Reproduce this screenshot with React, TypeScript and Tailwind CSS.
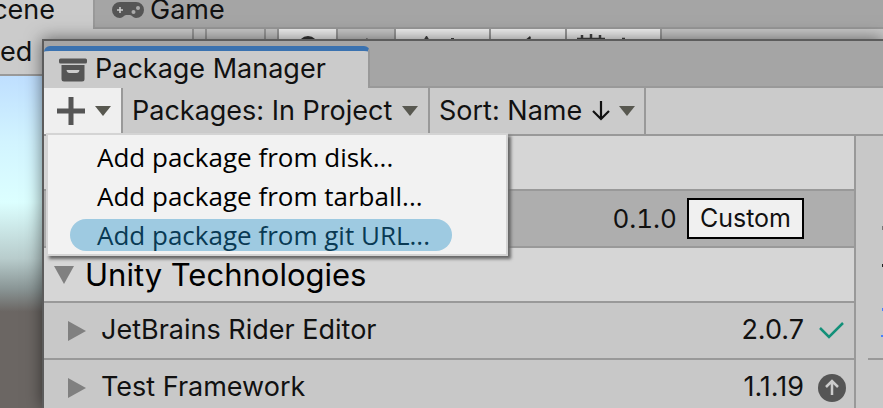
import type { ReactNode } from "react";

const inter = "font-['Inter','Liberation_Sans',sans-serif]";

function Caret({ className = "text-[#585850]" }: { className?: string }) {
  return (
    <svg viewBox="0 0 16 10" className={`h-[10px] w-4 shrink-0 ${className}`} aria-hidden="true">
      <path d="M0 0H16L8 10Z" fill="currentColor" />
    </svg>
  );
}

function Gamepad() {
  return (
    <svg viewBox="0 0 32 16" className="h-4 w-8 shrink-0" aria-hidden="true">
      <path d="M8 0H24A8 8 0 0 1 24 16C21 16 20 13 18 13H14C12 13 11 16 8 16A8 8 0 0 1 8 0Z" fill="#555" />
      <path d="M8 5V11M5 8H11" stroke="#ccc" strokeWidth="1.6" />
      <circle cx="26" cy="6" r="2" fill="#aaa" />
      <circle cx="21.500" cy="10" r="2" fill="#aaa" />
    </svg>
  );
}

function Archive() {
  return (
    <svg viewBox="0 0 28 24" className="h-6 w-7 shrink-0" aria-hidden="true">
      <rect x="0" y="0.500" width="28" height="5" rx="1.500" fill="#555" />
      <path d="M2.500 7H25.500V21Q25.500 23.500 23 23.500H5Q2.500 23.500 2.500 21Z" fill="#555" />
      <path d="M7.500 12H20.500Q20 15 17.500 15H10.500Q8 15 7.500 12Z" fill="#ccc" />
    </svg>
  );
}

function BackToolbar() {
  return (
    <div className="flex h-[45px] items-stretch">
      <div className="w-[192px] shrink-0 bg-[#cbcbcb]">
        <span className="block h-full pt-[5px] leading-[36px]">ed</span>
      </div>
      <div className="w-[15px] border-x-2 border-[#999] bg-[#c8c8c8]" />
      <div className="flex flex-1 bg-[#c8c8c8]">
        <div className="w-[59px] border-r-2 border-[#999]" />
        <div className="w-[13px] border-r-2 border-[#999]" />
        <div className="w-[59px] border-r-2 border-[#999] bg-[#f0f0f0]">
          <svg viewBox="0 0 57 12" className="h-3 w-[57px]" aria-hidden="true">
            <circle cx="29" cy="17" r="10" fill="#333" />
          </svg>
        </div>
        <div className="w-[58px] border-r-2 border-[#999]">
          <svg viewBox="0 0 56 12" className="h-3 w-14" aria-hidden="true">
            <path d="M26 12L29 9L31 12Z" fill="#444" />
          </svg>
        </div>
        <div className="w-[95px] border-r-2 border-[#999] bg-[#f0f0f0]">
          <svg viewBox="0 0 93 12" className="h-3 w-[93px]" aria-hidden="true">
            <path d="M27 12L30 7H31L34 12ZM55 9H58V12H55Z" fill="#444" />
          </svg>
        </div>
        <div className="w-[76px] border-r-2 border-[#999] bg-[#f0f0f0]">
          <svg viewBox="0 0 74 12" className="h-3 w-[74px]" aria-hidden="true">
            <path d="M33 12L39 7L40 9L38 12Z" fill="#333" />
          </svg>
        </div>
        <div className="w-[95px] border-r-2 border-[#999] bg-[#f0f0f0]">
          <svg viewBox="0 0 93 12" className="h-3 w-[93px]" aria-hidden="true">
            <path d="M10 10H38M15 6V12M24 5V12M33 6V12M55 10H58" stroke="#444" strokeWidth="2.500" />
          </svg>
        </div>
      </div>
    </div>
  );
}

function PackageRow({ name, version, children }: { name: string; version: string; children: ReactNode }) {
  return (
    <li className="flex h-[57px] items-center border-b-2 border-[#999] bg-[#c8c8c8] pr-2 pl-6">
      <button className="flex flex-1 items-center gap-[15px] text-left">
        <svg viewBox="0 0 18 20" className="h-5 w-[18px] shrink-0" aria-hidden="true">
          <path d="M0 0L18 10L0 20Z" fill="#808080" />
        </svg>
        {name}
      </button>
      <span className="pr-[14px]">{version}</span>
      {children}
    </li>
  );
}

function AddMenu() {
  const item = "mx-[22px] block h-8 rounded-full pr-[22px] pl-[27px] text-left leading-8 whitespace-nowrap";
  return (
    <div
      role="menu"
      className="absolute top-[92px] left-[2px] flex w-[462px] flex-col items-start gap-[7px] border-2 border-[#d4d4d4] bg-[#f2f2f2] pt-[6px] pb-[3px] font-['Open_Sans','Noto_Sans',sans-serif] text-[26px] text-black shadow-[3px_3px_3px_#666]"
    >
      <button role="menuitem" className={item}>Add package from disk...</button>
      <button role="menuitem" className={item}>Add package from tarball...</button>
      <button role="menuitem" className={`${item} bg-[#9ecae1] text-[#093a54]`}>Add package from git URL...</button>
    </div>
  );
}

function PackageManager() {
  return (
    <section className="absolute top-[39px] right-0 bottom-0 left-[42px] border-t-2 border-l-2 border-[#5c5c5c] bg-[#c8c8c8] shadow-[0_0_16px_#0008]">
      <header className="flex h-[47px] items-stretch bg-[#a5a5a5]">
        <h1 className="mt-[5px] flex w-[326px] items-center gap-2 rounded-t-md border-t-5 border-r-2 border-t-[#3a72b0] border-r-[#999] bg-[#cbcbcb] pl-[15px]">
          <Archive />
          Package Manager
        </h1>
        <div className="flex-1 border-b-2 border-[#999]" />
      </header>
      <nav className="flex h-[48px] items-stretch border-b-2 border-[#999] bg-[#cbcbcb]">
        <button aria-label="Add package" className="flex w-[79px] items-center gap-[10px] border-r-2 border-[#999] bg-[#efefef] pl-[13px]">
          <svg viewBox="0 0 28 28" className="size-7" aria-hidden="true">
            <path d="M14 0V28M0 14H28" stroke="#555" strokeWidth="5" />
          </svg>
          <Caret />
        </button>
        <button className="flex w-[307px] items-center justify-between border-r-2 border-[#999] pr-[10px] pl-[9px] whitespace-nowrap">
          Packages: In Project
          <Caret />
        </button>
        <button className="flex w-[216px] items-center justify-between border-r-2 border-[#999] pr-[9px] pl-[9px] whitespace-nowrap">
          <span>Sort: Name</span>
          <svg viewBox="0 0 18 20" className="h-5 w-[18px]" fill="none" stroke="#111" strokeWidth="2.200" aria-hidden="true">
            <path d="M9 0V18M1 10L9 18L17 10" />
          </svg>
          <Caret />
        </button>
      </nav>
      <div className="flex h-[272px] overflow-hidden">
        <ul className="flex-1">
          <li className="h-[55px] border-b-2 border-[#999] bg-[#d6d6d6]" />
          <li className="flex h-[57px] items-center justify-end gap-[10px] border-b-2 border-[#999] bg-[#aeaeae] pr-[50px]">
            <span className="text-[26px] tabular-nums">0.1.0</span>
            <button className="h-[41px] border-2 border-black bg-[#f0f0f0] px-[11px] pb-0.5 text-[25px]">Custom</button>
          </li>
          <li className="h-[55px] border-b-2 border-[#999] bg-[#d6d6d6]">
            <button className="flex h-full items-center gap-[11px] pl-[10px] text-[31px] leading-9 text-black">
              <svg viewBox="0 0 20 18" className="h-[18px] w-5" aria-hidden="true">
                <path d="M0 0H20L10 18Z" fill="#808080" />
              </svg>
              Unity Technologies
            </button>
          </li>
          <PackageRow name="JetBrains Rider Editor" version="2.0.7">
            <svg viewBox="0 0 28 28" className="size-7" fill="none" stroke="#139079" strokeWidth="2.500" aria-label="Installed">
              <path d="M2 11L11 20L25 6" />
            </svg>
          </PackageRow>
          <PackageRow name="Test Framework" version="1.1.19">
            <svg viewBox="0 0 28 28" className="size-7" fill="none" aria-label="Update available">
              <circle cx="14" cy="14" r="14" fill="#555" />
              <path d="M14 21V7M8 13L14 7L20 13" stroke="#ccc" strokeWidth="2.500" />
            </svg>
          </PackageRow>
        </ul>
        <aside className="w-[29px] border-l-2 border-[#999] bg-[#c8c8c8]">
          <svg viewBox="0 0 27 222" className="h-[222px] w-[27px]" aria-hidden="true">
            <path d="M26 90H27V94H26Z" fill="#777" />
            <path d="M26 128H27V131H26Z" fill="#222" />
            <path d="M26 172H27V175H26ZM25 199H27V201H25Z" fill="#4c7eff" />
          </svg>
          <div className="ml-3 border-t-2 border-[#999]" />
        </aside>
      </div>
      <AddMenu />
    </section>
  );
}

export default function App() {
  return (
    <main className={`relative flex h-screen flex-col overflow-hidden text-[27px] text-[#111] ${inter}`}>
      <div className="flex h-[29px] overflow-hidden bg-[#a5a5a5] leading-9">
        <div className="-mt-2 flex w-[93px] justify-end bg-[#cbcbcb] pr-[38px]">Scene</div>
        <div className="flex flex-1 border-b-2 border-l-2 border-[#999] pl-[17px]">
          <div className="flex h-[20px] items-center gap-[6px]">
            <Gamepad />
            Game
          </div>
        </div>
      </div>
      <BackToolbar />
      <div className="flex-1 border-t-2 border-[#999] bg-[linear-gradient(#bfdfff,#d2f4ff_20%,#dcffff_38%,#b8cccc_55%,#8a9696_64%,#6b6663_71%)]" />
      <PackageManager />
    </main>
  );
}
